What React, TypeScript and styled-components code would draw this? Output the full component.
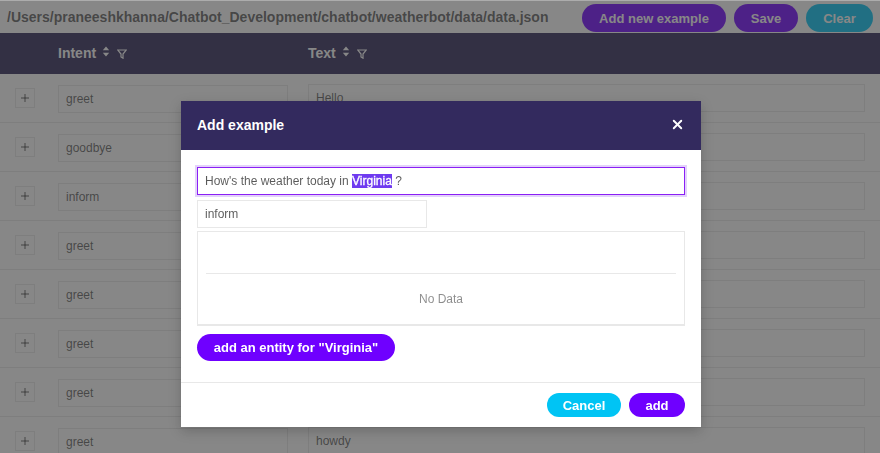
import styled, { createGlobalStyle } from "styled-components";
import { X } from "lucide-react";

const GlobalStyle = createGlobalStyle`
  html, body {
    margin: 0;
    padding: 0;
    background: #fff;
    overflow: hidden;
  }
  * { box-sizing: border-box; }
  body {
    font-family: "Liberation Sans", Arial, sans-serif;
    font-size: 12px;
    color: rgba(0, 0, 0, 0.65);
  }
`;

const Page = styled.div`
  width: 880px;
  height: 453px;
  overflow: hidden;
`;

const TopBar = styled.div`
  height: 33px;
  margin-top: 1px;
  padding: 3px 7px 0 7px;
  display: flex;
  align-items: flex-start;
  gap: 8px;
`;

const FilePath = styled.div`
  flex: 1;
  font-size: 14px;
  font-weight: bold;
  line-height: 28px;
  margin-top: -1px;
  white-space: nowrap;
`;

const Pill = styled.button<{ $color: string; $w: number; $h: number }>`
  width: ${(p) => p.$w}px;
  height: ${(p) => p.$h}px;
  border: 0;
  border-radius: ${(p) => p.$h / 2}px;
  background: ${(p) => p.$color};
  color: #fff;
  font-family: inherit;
  font-size: 13px;
  font-weight: bold;
  padding: 0;
  white-space: nowrap;
`;

const TableHead = styled.div`
  height: 41px;
  margin-top: -1px;
  padding-bottom: 2px;
  background: #2e2658;
  color: #fff;
  display: flex;
  align-items: center;
  font-size: 14px;
  font-weight: bold;
`;

const HeadCell = styled.div<{ $left: number; $w: number }>`
  width: ${(p) => p.$w}px;
  margin-left: ${(p) => p.$left}px;
  display: flex;
  align-items: center;
  gap: 6px;
`;

const Row = styled.div`
  height: 49px;
  border-bottom: 1px solid #e8e8e8;
  display: flex;
  align-items: flex-start;
  padding: 11px 15px 0 15px;
`;

const Expand = styled.div`
  width: 20px;
  height: 20px;
  margin-top: 3px;
  margin-right: 23px;
  border: 1px solid #e8e8e8;
  display: flex;
  align-items: center;
  justify-content: center;
`;

const Field = styled.div<{ $w: number; $up?: boolean }>`
  width: ${(p) => p.$w}px;
  height: 28px;
  margin-top: ${(p) => (p.$up ? -1 : 0)}px;
  border: 1px solid #e8e8e8;
  padding: 0 7px;
  line-height: 26px;
  font-size: 12px;
  background: #fff;
  flex: none;
`;

const Gap = styled.div`
  width: 20px;
  flex: none;
`;

const Overlay = styled.div`
  position: fixed;
  inset: 0;
  background: rgba(55, 55, 55, 0.6);
  border-top: 1px solid rgba(255, 255, 255, 0.3);
`;

const Modal = styled.div`
  position: fixed;
  left: 181px;
  top: 101px;
  width: 520px;
  height: 326px;
  background: #fff;
  box-shadow: 0 4px 12px rgba(0, 0, 0, 0.2);
  display: flex;
  flex-direction: column;
`;

const ModalHead = styled.div`
  height: 49px;
  flex: none;
  background: #332a5e;
  color: #fff;
  font-size: 14px;
  font-weight: bold;
  display: flex;
  align-items: center;
  justify-content: space-between;
  padding: 0 16px 2px 16px;
`;

const ModalBody = styled.div`
  flex: 1;
  padding: 17px 16px 0 16px;
  display: flex;
  flex-direction: column;
  align-items: flex-start;
`;

const SentenceInput = styled.div`
  width: 488px;
  height: 28px;
  border: 1px solid #8a1ff5;
  box-shadow: 0 0 0 2px #e3d2fa;
  padding: 0 7px;
  line-height: 26px;
  white-space: pre;
  font-size: 12px;
`;

const Highlight = styled.span`
  background: #6f3af0;
  color: #fff;
  -webkit-text-stroke: 0.3px #fff;
`;

const IntentInput = styled.div`
  width: 230px;
  height: 28px;
  margin-top: 5px;
  border: 1px solid #e8e8e8;
  padding: 0 7px;
  line-height: 26px;
`;

const EntityTable = styled.div`
  width: 488px;
  height: 95px;
  margin-top: 3px;
  border: 1px solid #e8e8e8;
  border-bottom-width: 2px;
  padding: 0 8px;
  display: flex;
  flex-direction: column;
`;

const EntityHead = styled.div`
  height: 42px;
  flex: none;
  border-bottom: 1px solid #e8e8e8;
`;

const Empty = styled.div`
  flex: 1;
  padding-bottom: 1px;
  display: flex;
  align-items: center;
  justify-content: center;
  color: rgba(0, 0, 0, 0.45);
`;

const EntityButton = styled(Pill)`
  margin-top: 8px;
`;

const ModalFoot = styled.div`
  height: 45px;
  flex: none;
  border-top: 1px solid #e8e8e8;
  padding: 10px 16px 0 16px;
  display: flex;
  justify-content: flex-end;
  gap: 8px;
`;

const rows = [
  { intent: "greet", text: "Hello" },
  { intent: "goodbye", text: "" },
  { intent: "inform", text: "" },
  { intent: "greet", text: "" },
  { intent: "greet", text: "" },
  { intent: "greet", text: "" },
  { intent: "greet", text: "" },
  { intent: "greet", text: "howdy" },
];

function SortFilter() {
  return (
    <>
      <svg width="8" height="11" viewBox="0 0 8 11" fill="currentColor" style={{ marginTop: -2 }}>
        <path d="M4 0.5 L7.2 4.2 H0.8 Z M4 10.5 L0.8 6.8 H7.2 Z" />
      </svg>
      <svg width="10" height="10" viewBox="0 0 10 10" fill="none" stroke="currentColor" strokeWidth="1.2" style={{ marginTop: 2, marginLeft: 1 }}>
        <path d="M0.7 1 H9.3 L6 5 V9.2 L4 8 V5 Z" />
      </svg>
    </>
  );
}

function PlusIcon() {
  return (
    <svg width="10" height="10" viewBox="0 0 10 10" stroke="currentColor" strokeWidth="1">
      <path d="M5 1 V9 M1 5 H9" />
    </svg>
  );
}

export default function App() {
  return (
    <>
      <GlobalStyle />
      <Page>
        <TopBar>
          <FilePath>/Users/praneeshkhanna/Chatbot_Development/chatbot/weatherbot/data/data.json</FilePath>
          <Pill $color="#6f00ff" $w={144} $h={28}>Add new example</Pill>
          <Pill $color="#6f00ff" $w={64} $h={28}>Save</Pill>
          <Pill $color="#00c4f4" $w={67} $h={28}>Clear</Pill>
        </TopBar>
        <TableHead>
          <HeadCell $left={58} $w={230}>Intent <SortFilter /></HeadCell>
          <HeadCell $left={20} $w={300}>Text <SortFilter /></HeadCell>
        </TableHead>
        {rows.map((r, i) => (
          <Row key={i}>
            <Expand><PlusIcon /></Expand>
            <Field $w={230}>{r.intent}</Field>
            <Gap />
            <Field $w={557} $up>{r.text}</Field>
          </Row>
        ))}
      </Page>
      <Overlay />
      <Modal>
        <ModalHead>
          Add example
          <X size={15} strokeWidth={3} />
        </ModalHead>
        <ModalBody>
          <SentenceInput>How's the weather today in <Highlight>Virginia</Highlight> ?</SentenceInput>
          <IntentInput>inform</IntentInput>
          <EntityTable>
            <EntityHead />
            <Empty>No Data</Empty>
          </EntityTable>
          <EntityButton $color="#6f00ff" $w={198} $h={27}>add an entity for "Virginia"</EntityButton>
        </ModalBody>
        <ModalFoot>
          <Pill $color="#00c4f4" $w={74} $h={24}>Cancel</Pill>
          <Pill $color="#6f00ff" $w={56} $h={24}>add</Pill>
        </ModalFoot>
      </Modal>
    </>
  );
}
